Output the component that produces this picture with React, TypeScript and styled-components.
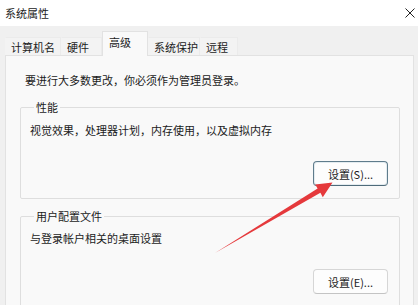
import React from "react";
import styled, { createGlobalStyle } from "styled-components";

const GlobalStyle = createGlobalStyle`
  html, body {
    margin: 0;
    padding: 0;
    background: #f0f0f0;
  }
  body {
    font-family: "Noto Sans CJK SC", "Noto Sans", sans-serif;
    color: #1b1b1b;
  }
`;

const Window = styled.div({
  position: "relative",
  width: "418px",
  height: "305px",
  overflow: "hidden",
  display: "flex",
  flexDirection: "column",
  backgroundColor: "#f0f0f0",
});

const TitleBar = styled.div({
  height: "26px",
  flexShrink: 0,
  display: "flex",
  alignItems: "center",
  justifyContent: "space-between",
  padding: "0 2px 0 5px",
  backgroundColor: "#ffffff",
  fontSize: "11px",
  lineHeight: "14px",
});

const CloseButton = styled.div({
  width: "12px",
  height: "12px",
  display: "flex",
  alignItems: "center",
  justifyContent: "center",
});

const TabStrip = styled.div({
  height: "29px",
  flexShrink: 0,
  display: "flex",
  alignItems: "flex-end",
  padding: "0 0 0 5px",
  position: "relative",
  zIndex: 2,
});

const Tab = styled.div<{ $width: number; $active?: boolean }>`
  box-sizing: border-box;
  width: ${(p) => p.$width}px;
  height: ${(p) => (p.$active ? "25px" : "18px")};
  margin-bottom: ${(p) => (p.$active ? "-1px" : "0")};
  padding: ${(p) => (p.$active ? "3px 0 0 6px" : "2px 0 0 5px")};
  font-size: 11px;
  line-height: 14px;
  white-space: nowrap;
  background: ${(p) => (p.$active ? "#f9f9f9" : "#f3f3f3")};
  border: 1px solid ${(p) => (p.$active ? "#e2e2e2" : "#ebebeb")};
  border-bottom: none;
  border-left-color: ${(p) => (p.$active ? "#e2e2e2" : "transparent")};
`;

const Panel = styled.div({
  flex: 1,
  margin: "0 4px 0 5px",
  padding: "16px 13px 0 14px",
  backgroundColor: "#f9f9f9",
  border: "1px solid #e2e2e2",
  borderBottom: "none",
});

const Notice = styled.div({
  marginLeft: "5px",
  fontSize: "11px",
  lineHeight: "16px",
});

const GroupBox = styled.fieldset<{ $gap: number }>`
  margin: ${(p) => p.$gap}px 0 0 0;
  padding: 8px 11px 12px 9px;
  border: 1px solid #dedede;
  border-radius: 2px;
  min-width: 0;
`;

const GroupTitle = styled.legend({
  margin: "0 0 0 4px",
  padding: "0 2px",
  fontSize: "11px",
  lineHeight: "14px",
});

const GroupText = styled.div<{ $top: number }>`
  margin-top: ${(p) => p.$top}px;
  font-size: 11px;
  line-height: 16px;
`;

const ButtonRow = styled.div({
  display: "flex",
  justifyContent: "flex-end",
  marginTop: "23px",
});

const Button = styled.button<{ $focused?: boolean }>`
  box-sizing: border-box;
  width: 75px;
  height: 25px;
  padding: 0;
  font-family: inherit;
  font-size: 11px;
  color: #1b1b1b;
  background: #fdfdfd;
  border-radius: 4px;
  border: 1px solid ${(p) => (p.$focused ? "#5f7c8c" : "#d6d6d6")};
  border-bottom-color: ${(p) => (p.$focused ? "#4f6b7a" : "#c4c4c4")};
  box-shadow: ${(p) => (p.$focused ? "inset 0 0 0 1px #e4ecf0" : "none")};
`;

const Annotation = styled.svg({
  position: "absolute",
  left: 0,
  top: 0,
  pointerEvents: "none",
});

const tabs = [
  { label: "计算机名", width: 56 },
  { label: "硬件", width: 41 },
  { label: "高级", width: 46, active: true },
  { label: "系统保护", width: 52 },
  { label: "远程", width: 38 },
];

export default function App() {
  return (
    <Window>
      <GlobalStyle />
      <TitleBar>
        <span>系统属性</span>
        <CloseButton>
          <svg width="10" height="10" viewBox="0 0 10 10">
            <path d="M0.5 0.5 L9.5 9.5 M9.5 0.5 L0.5 9.5" stroke="#222" strokeWidth="1" />
          </svg>
        </CloseButton>
      </TitleBar>
      <TabStrip>
        {tabs.map((t) => (
          <Tab key={t.label} $width={t.width} $active={t.active}>
            {t.label}
          </Tab>
        ))}
      </TabStrip>
      <Panel>
        <Notice>要进行大多数更改，你必须作为管理员登录。</Notice>
        <GroupBox $gap={12}>
          <GroupTitle>性能</GroupTitle>
          <GroupText $top={0}>视觉效果，处理器计划，内存使用，以及虚拟内存</GroupText>
          <ButtonRow>
            <Button $focused>设置(S)...</Button>
          </ButtonRow>
        </GroupBox>
        <GroupBox $gap={10}>
          <GroupTitle>用户配置文件</GroupTitle>
          <GroupText $top={-1}>与登录帐户相关的桌面设置</GroupText>
          <ButtonRow>
            <Button>设置(E)...</Button>
          </ButtonRow>
        </GroupBox>
      </Panel>
      <Annotation width="418" height="305" viewBox="0 0 418 305">
        <polygon
          points="215,253 317.6,188.6 315.2,184.6 332.5,182.5 322.8,197.2 320.4,192.8"
          fill="#e5393c"
        />
      </Annotation>
    </Window>
  );
}
